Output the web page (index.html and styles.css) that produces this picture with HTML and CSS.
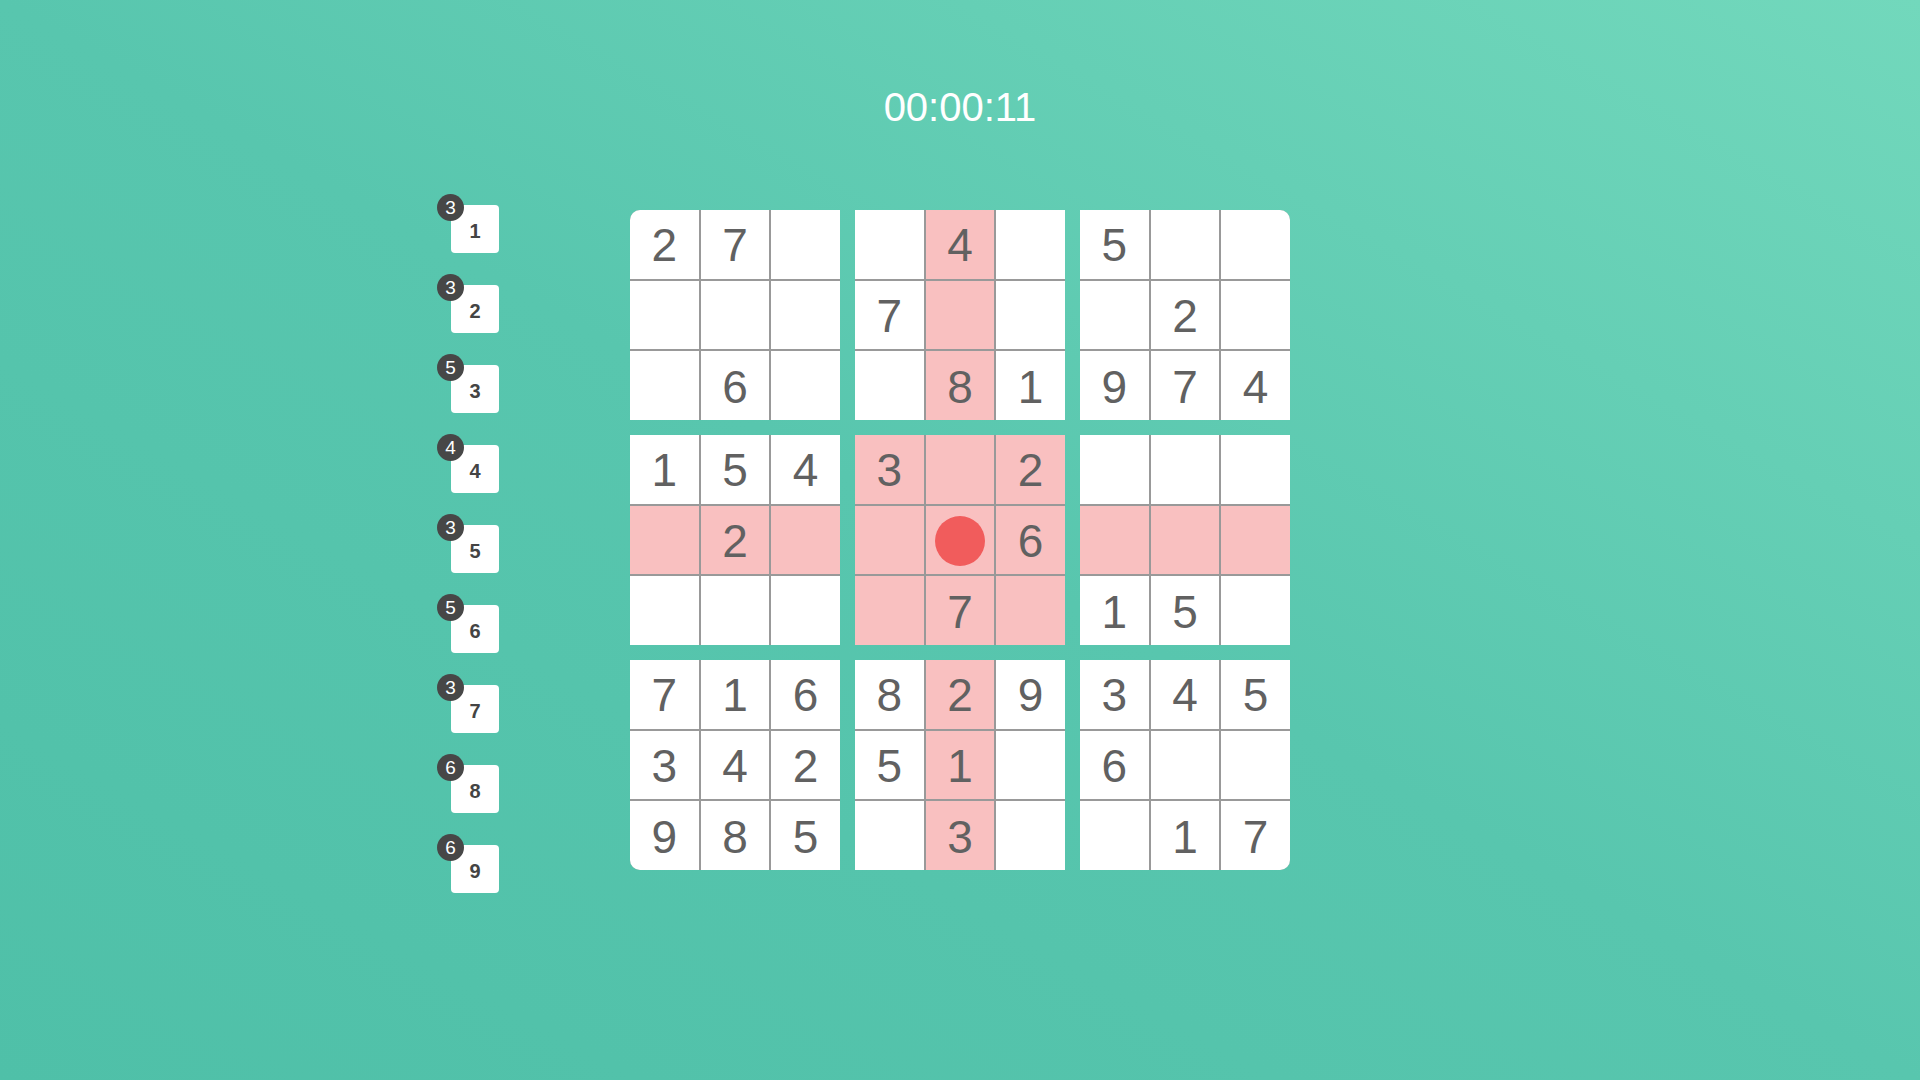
FILE: index.html
```html
<!DOCTYPE html>
<html lang="en">
<head>
<meta charset="utf-8">
<title>Sudoku</title>
<link rel="stylesheet" href="styles.css">
</head>
<body>
<div class="timer">00:00:11</div>
<div class="main">
  <div class="panel">
    <div class="key"><span class="badge">3</span>1</div>
    <div class="key"><span class="badge">3</span>2</div>
    <div class="key"><span class="badge">5</span>3</div>
    <div class="key"><span class="badge">4</span>4</div>
    <div class="key"><span class="badge">3</span>5</div>
    <div class="key"><span class="badge">5</span>6</div>
    <div class="key"><span class="badge">3</span>7</div>
    <div class="key"><span class="badge">6</span>8</div>
    <div class="key"><span class="badge">6</span>9</div>
  </div>
  <div class="board">
    <div class="block b-tl">
      <div class="cell">2</div><div class="cell">7</div><div class="cell"></div>
      <div class="cell"></div><div class="cell"></div><div class="cell"></div>
      <div class="cell"></div><div class="cell">6</div><div class="cell"></div>
    </div>
    <div class="block">
      <div class="cell"></div><div class="cell hl">4</div><div class="cell"></div>
      <div class="cell">7</div><div class="cell hl"></div><div class="cell"></div>
      <div class="cell"></div><div class="cell hl">8</div><div class="cell">1</div>
    </div>
    <div class="block b-tr">
      <div class="cell">5</div><div class="cell"></div><div class="cell"></div>
      <div class="cell"></div><div class="cell">2</div><div class="cell"></div>
      <div class="cell">9</div><div class="cell">7</div><div class="cell">4</div>
    </div>
    <div class="block">
      <div class="cell">1</div><div class="cell">5</div><div class="cell">4</div>
      <div class="cell hl"></div><div class="cell hl">2</div><div class="cell hl"></div>
      <div class="cell"></div><div class="cell"></div><div class="cell"></div>
    </div>
    <div class="block">
      <div class="cell hl">3</div><div class="cell hl"></div><div class="cell hl">2</div>
      <div class="cell hl"></div><div class="cell hl"><span class="dot"></span></div><div class="cell hl">6</div>
      <div class="cell hl"></div><div class="cell hl">7</div><div class="cell hl"></div>
    </div>
    <div class="block">
      <div class="cell"></div><div class="cell"></div><div class="cell"></div>
      <div class="cell hl"></div><div class="cell hl"></div><div class="cell hl"></div>
      <div class="cell">1</div><div class="cell">5</div><div class="cell"></div>
    </div>
    <div class="block b-bl">
      <div class="cell">7</div><div class="cell">1</div><div class="cell">6</div>
      <div class="cell">3</div><div class="cell">4</div><div class="cell">2</div>
      <div class="cell">9</div><div class="cell">8</div><div class="cell">5</div>
    </div>
    <div class="block">
      <div class="cell">8</div><div class="cell hl">2</div><div class="cell">9</div>
      <div class="cell">5</div><div class="cell hl">1</div><div class="cell"></div>
      <div class="cell"></div><div class="cell hl">3</div><div class="cell"></div>
    </div>
    <div class="block b-br">
      <div class="cell">3</div><div class="cell">4</div><div class="cell">5</div>
      <div class="cell">6</div><div class="cell"></div><div class="cell"></div>
      <div class="cell"></div><div class="cell">1</div><div class="cell">7</div>
    </div>
  </div>
  <div class="spacer"></div>
</div>
</body>
</html>
```

FILE: styles.css
```css
html, body {
  margin: 0;
  padding: 0;
}

body {
  width: 1920px;
  height: 1080px;
  overflow: hidden;
  background: linear-gradient(to top right, #4fc0a8 0%, #58c6ae 50%, #72d8bc 100%);
  font-family: "Liberation Sans", Arial, sans-serif;
}

.timer {
  padding-top: 87px;
  font-size: 40px;
  line-height: 40px;
  color: #ffffff;
  text-align: center;
}

.main {
  display: grid;
  grid-template-columns: 1fr auto 1fr;
  align-items: start;
  margin-top: 83px;
}

.panel {
  justify-self: end;
  margin-right: 131px;
  margin-top: -5px;
  display: flex;
  flex-direction: column;
  gap: 32px;
}

.key {
  position: relative;
  width: 48px;
  height: 48px;
  box-sizing: border-box;
  padding-top: 4px;
  background: #ffffff;
  border-radius: 4px;
  display: flex;
  align-items: center;
  justify-content: center;
  font-size: 20px;
  font-weight: bold;
  color: #444444;
}

.badge {
  position: absolute;
  left: -14px;
  top: -11px;
  width: 27px;
  height: 27px;
  border-radius: 50%;
  background: #474747;
  color: #ffffff;
  font-size: 19px;
  font-weight: normal;
  display: flex;
  align-items: center;
  justify-content: center;
}

.board {
  display: grid;
  grid-template-columns: repeat(3, 210px);
  grid-template-rows: repeat(3, 210px);
  gap: 15px;
}

.block {
  display: grid;
  grid-template-columns: repeat(3, 1fr);
  grid-template-rows: repeat(3, 1fr);
  gap: 2px;
  background: #999999;
  overflow: hidden;
}

.b-tl { border-top-left-radius: 10px; }
.b-tr { border-top-right-radius: 10px; }
.b-bl { border-bottom-left-radius: 10px; }
.b-br { border-bottom-right-radius: 10px; }

.cell {
  box-sizing: border-box;
  padding-top: 2px;
  background: #ffffff;
  display: flex;
  align-items: center;
  justify-content: center;
  font-size: 46px;
  line-height: 46px;
  color: #616161;
}

.cell.hl {
  background: #f9c0c0;
}

.dot {
  width: 50px;
  height: 50px;
  border-radius: 50%;
  background: #f15c5c;
}
```
